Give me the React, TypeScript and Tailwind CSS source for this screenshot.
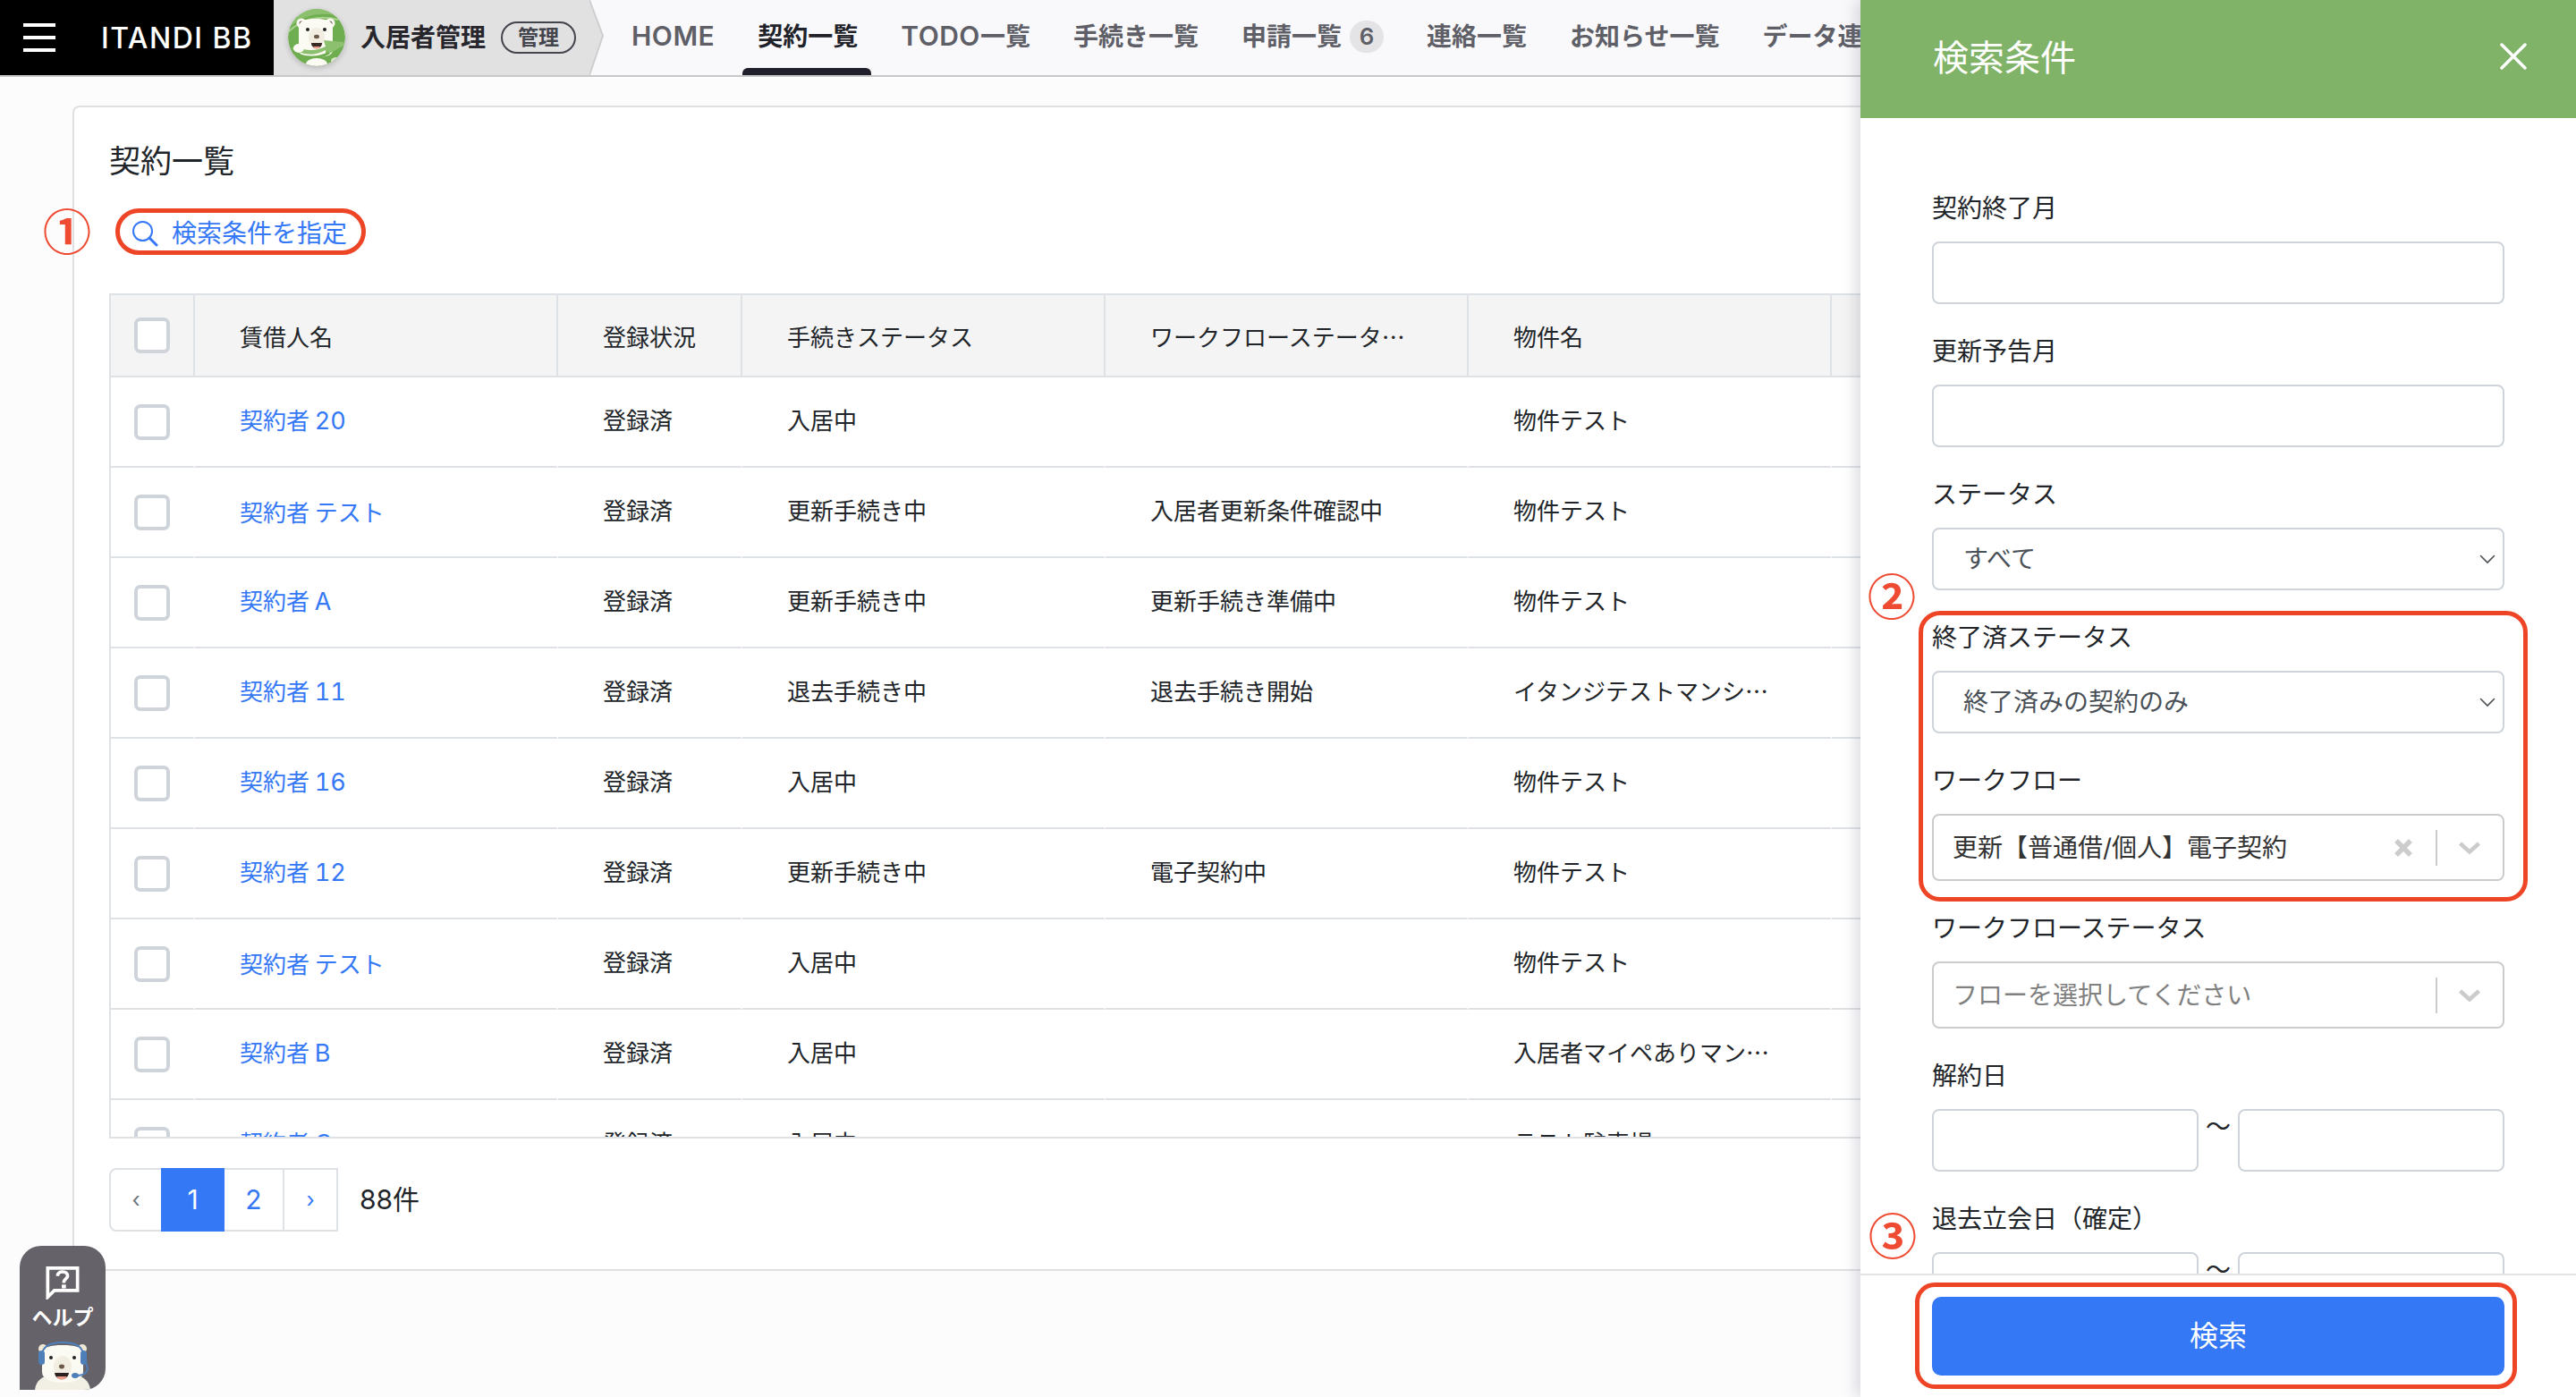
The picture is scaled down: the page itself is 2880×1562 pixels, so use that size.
import React from "react";

const FONT = "font-['Inter','Noto_Sans_CJK_JP',sans-serif]";
const JP = "font-['Noto_Sans_CJK_JP',sans-serif]";

type Row = { name: string; reg: string; proc: string; flow: string; prop: string };
const rows: Row[] = [
  { name: "20", reg: "登録済", proc: "入居中", flow: "", prop: "物件テスト" },
  { name: "テスト", reg: "登録済", proc: "更新手続き中", flow: "入居者更新条件確認中", prop: "物件テスト" },
  { name: "A", reg: "登録済", proc: "更新手続き中", flow: "更新手続き準備中", prop: "物件テスト" },
  { name: "11", reg: "登録済", proc: "退去手続き中", flow: "退去手続き開始", prop: "イタンジテストマンシ…" },
  { name: "16", reg: "登録済", proc: "入居中", flow: "", prop: "物件テスト" },
  { name: "12", reg: "登録済", proc: "更新手続き中", flow: "電子契約中", prop: "物件テスト" },
  { name: "テスト", reg: "登録済", proc: "入居中", flow: "", prop: "物件テスト" },
  { name: "B", reg: "登録済", proc: "入居中", flow: "", prop: "入居者マイペありマン…" },
  { name: "C", reg: "登録済", proc: "入居中", flow: "", prop: "テスト駐車場" },
];

function BearAvatar() {
  return (
    <svg viewBox="0 0 64 64" className="h-[64px] w-[64px] rounded-full shadow-[0_2px_6px_rgba(0,0,0,0.2)]">
      <defs>
        <clipPath id="av">
          <circle cx="32" cy="32" r="32" />
        </clipPath>
      </defs>
      <g clipPath="url(#av)">
        <rect width="64" height="64" fill="#6fae50" />
        <path d="M0 22C14 8 34 2 60 8L64 0H0Z" fill="#8cc06f" />
        <path d="M0 26C14 12 34 6 56 12" stroke="#a9d28f" strokeWidth="2" fill="none" />
        <circle cx="15" cy="16" r="5.5" fill="#fbfaf3" />
        <circle cx="15" cy="16" r="2.5" fill="#6b5a4a" />
        <circle cx="47" cy="16" r="5.5" fill="#fbfaf3" />
        <circle cx="47" cy="16" r="2.5" fill="#6b5a4a" />
        <path d="M12 20C12 13 20 11 31 11C42 11 50 13 50 20V46C50 52 42 54 31 54C20 54 12 52 12 46Z" fill="#fbfaf3" />
        <ellipse cx="32" cy="32" rx="9" ry="11" fill="#f1ede1" />
        <circle cx="22" cy="23" r="2" fill="#222" />
        <circle cx="41" cy="23" r="2" fill="#222" />
        <ellipse cx="32" cy="31" rx="3" ry="2.2" fill="#6b5a4a" />
        <path d="M26 38H38C38 43 34 44 32 44C30 44 26 43 26 38Z" fill="#3a2a26" />
        <path d="M28 42H36C35 44 33 44.5 32 44.5C31 44.5 29 44 28 42Z" fill="#ee9c8a" />
        <path d="M4 44C16 52 30 53 42 46L42 52L64 40L62 37L40 35L42 42C30 48 18 47 8 41Z" fill="#8cc06f" />
        <path d="M4 47C16 56 34 56 46 49" stroke="#6fae50" strokeWidth="3" fill="none" />
        <ellipse cx="12" cy="44" rx="6" ry="5" fill="#fbfaf3" />
        <ellipse cx="32" cy="62" rx="12" ry="7" fill="#fbfaf3" />
        <ellipse cx="54" cy="58" rx="6" ry="4" fill="#d8e8c8" />
      </g>
    </svg>
  );
}

function HelpBear() {
  return (
    <svg viewBox="0 0 66 54" className="h-[54px] w-[66px]">
      <path d="M2 54C3 44 10 39 18 38H48C56 39 63 44 64 54Z" fill="#f2efe4" />
      <circle cx="11" cy="8" r="5" fill="#efe8d4" />
      <circle cx="55" cy="8" r="5" fill="#efe8d4" />
      <path d="M10 14C10 6 20 4 33 4C46 4 56 6 56 14V34C56 42 46 46 33 46C20 46 10 42 10 34Z" fill="#fbfaf3" />
      <path d="M10 16C10 4 22 1 33 1C44 1 56 4 56 16" stroke="#4f7fb8" strokeWidth="2" fill="none" />
      <rect x="6" y="10" width="7" height="16" rx="3.5" fill="#4f7fb8" />
      <rect x="53" y="10" width="7" height="16" rx="3.5" fill="#4f7fb8" />
      <path d="M59 24C63 32 60 38 48 38" stroke="#4f7fb8" strokeWidth="2" fill="none" />
      <ellipse cx="47" cy="38" rx="4" ry="3" fill="#4f7fb8" />
      <ellipse cx="33" cy="28" rx="10" ry="12" fill="#f1ede1" />
      <circle cx="20" cy="18" r="2" fill="#222" />
      <circle cx="46" cy="18" r="2" fill="#222" />
      <ellipse cx="32" cy="28" rx="3" ry="2.4" fill="#6b5a4a" />
      <path d="M24 35H40C39 41 35 42 32 42C29 42 25 41 24 35Z" fill="#2b2120" />
      <path d="M26 39H38C36 42 34 42.5 32 42.5C30 42.5 28 42 26 39Z" fill="#ee9c8a" />
    </svg>
  );
}

function Chevron({ heavy }: { heavy?: boolean }) {
  return heavy ? (
    <svg viewBox="0 0 26 16" className="h-[16px] w-[26px]">
      <path d="M2.5 3L13 12.5L23.5 3" stroke="#cccccc" strokeWidth="4.5" fill="none" />
    </svg>
  ) : (
    <svg viewBox="0 0 18 11" className="h-[11px] w-[18px]">
      <path d="M1.5 1.5L9 9L16.5 1.5" stroke="#4a4f55" strokeWidth="1.6" fill="none" strokeLinecap="round" />
    </svg>
  );
}

function Check() {
  return <div className="mx-auto h-[40px] w-[40px] rounded-[7px] border-[4px] border-[#ced4da] bg-white" />;
}

function Label({ children }: { children: React.ReactNode }) {
  return <div className="mb-[17px] flex h-[40px] items-center text-[28px] leading-[40px] text-[#212529]">{children}</div>;
}

function TextInput() {
  return <input className="block h-[70px] w-full rounded-[8px] border-2 border-[#ced4da] bg-white" />;
}

function Field({ label, children }: { label: string; children: React.ReactNode }) {
  return (
    <div className="mb-[33px]">
      <Label>{label}</Label>
      {children}
    </div>
  );
}

function NativeSelect({ value }: { value: string }) {
  return (
    <div className="flex h-[70px] items-center justify-between rounded-[8px] border-2 border-[#ced4da] bg-white pl-[33px] pr-[8px] text-[28px] text-[#495057]">
      <span>{value}</span>
      <Chevron />
    </div>
  );
}

function ComboSelect({ value, placeholder }: { value?: string; placeholder?: string }) {
  return (
    <div className="flex h-[75px] items-center rounded-[8px] border-2 border-[#cccccc] bg-white pl-[21px] text-[28px]">
      <span className={value ? "flex-1 text-[#333333]" : "flex-1 text-[#808080]"}>{value ?? placeholder}</span>
      {value ? (
        <svg viewBox="0 0 22 22" className="mr-[25px] h-[22px] w-[22px]">
          <path d="M3 3L19 19M19 3L3 19" stroke="#cccccc" strokeWidth="5.5" />
        </svg>
      ) : null}
      <div className="h-[40px] w-[2px] bg-[#cccccc]" />
      <div className="ml-[23px] mr-[24px] flex">
        <Chevron heavy />
      </div>
    </div>
  );
}

function DateRange() {
  return (
    <div className="flex items-start">
      <input className="block h-[70px] w-[298px] rounded-[8px] border-2 border-[#ced4da] bg-white" />
      <div className="w-[44px] text-center text-[28px] leading-[40px] text-[#212529]">〜</div>
      <input className="block h-[70px] w-[298px] rounded-[8px] border-2 border-[#ced4da] bg-white" />
    </div>
  );
}

function NavItem({ label, latin, active }: { label: string; latin?: string; active?: boolean }) {
  return (
    <div className="relative flex h-[84px] shrink-0 items-center pb-[3px]">
      <span className={active ? "text-[28px] font-bold text-[#212129]" : "text-[28px] font-semibold text-[#5f5f68]"}>
        {latin ? <span className="text-[30px] tracking-[0.5px]">{latin}</span> : null}
        {label}
      </span>
      {active ? <div className="absolute bottom-0 left-[-17px] right-[-15px] h-[8px] rounded-t-[6px] bg-[#20202c]" /> : null}
    </div>
  );
}

export default function App() {
  const th = `border-b-2 border-r-2 border-[#dee2e6] bg-[#f4f4f4] pl-[50px] pt-[1px] text-left align-middle text-[26px] font-normal text-[#212529] ${JP}`;
  const td = `border-b-2 border-r-2 border-b-[#dee2e6] border-r-white pb-[6px] pl-[50px] align-middle text-[26px] text-[#212529] ${JP}`;
  const nameTd = `border-b-2 border-r-2 border-b-[#dee2e6] border-r-white pb-[3px] pl-[50px] align-middle text-[26px] ${JP}`;
  const marker = `absolute flex h-[60px] w-[60px] items-center justify-center text-[54px] font-bold leading-none text-[#ef4a32] ${JP}`;
  return (
    <div className={`relative h-[1562px] w-[2880px] overflow-hidden bg-[#fcfcfd] ${FONT}`}>
      <header className="flex h-[86px] border-b-2 border-[#c8c8c8] bg-[#f9f9fb]">
        <div className="flex h-[84px] w-[306px] shrink-0 items-center bg-black pl-[26px]">
          <div className="flex h-[32px] w-[36px] flex-col justify-between">
            <div className="h-[4px] bg-white" />
            <div className="h-[4px] bg-white" />
            <div className="h-[4px] bg-white" />
          </div>
          <span className="ml-[51px] pt-[1px] text-[32px] font-medium tracking-[1.5px] text-white">ITANDI BB</span>
        </div>
        <div className="flex h-[84px] w-[353px] shrink-0 items-center bg-[#e1e1e2] pl-[16px]">
          <BearAvatar />
          <span className="ml-[17px] text-[28px] font-bold text-[#26262c]">入居者管理</span>
          <span className="ml-[17px] flex h-[36px] w-[84px] items-center justify-center rounded-full border-2 border-[#44444c] text-[23px] font-bold text-[#44444c]">管理</span>
        </div>
        <svg viewBox="0 0 16 84" className="h-[84px] w-[16px] shrink-0">
          <path d="M0 0L15 40L0 84Z" fill="#e1e1e2" />
          <path d="M0 0L15 40L0 84" fill="none" stroke="#cfcfd2" strokeWidth="2" />
        </svg>
        <nav className="ml-[31px] flex items-center gap-[48px] whitespace-nowrap">
          <NavItem latin="HOME" label="" />
          <NavItem label="契約一覧" active />
          <NavItem latin="TODO" label="一覧" />
          <NavItem label="手続き一覧" />
          <div className="flex items-center gap-[9px]">
            <NavItem label="申請一覧" />
            <span className="mb-[3px] flex h-[36px] w-[38px] items-center justify-center rounded-full bg-[#e4e4e6] text-[26px] font-semibold text-[#5f5f68]">6</span>
          </div>
          <NavItem label="連絡一覧" />
          <NavItem label="お知らせ一覧" />
          <NavItem label="データ連携" />
        </nav>
      </header>

      <main className="ml-[81px] mt-[32px] flex h-[1303px] w-[2900px] flex-col rounded-tl-[8px] border-2 border-[#e0e0e2] bg-white pl-[39px] pt-[35px]">
        <h1 className="flex h-[50px] items-center text-[35px] font-normal text-[#212529]">契約一覧</h1>
        <button className="ml-[25px] mt-[30px] flex h-[52px] items-center self-start text-[28px] text-[#3478f6]">
          <svg viewBox="0 0 30 30" className="h-[30px] w-[30px]">
            <circle cx="12.5" cy="12.5" r="10.5" stroke="#3478f6" strokeWidth="2" fill="none" />
            <path d="M20 20L28 28" stroke="#3478f6" strokeWidth="3" strokeLinecap="round" />
          </svg>
          <span className="ml-[15px]">検索条件を指定</span>
        </button>

        <div className="mt-[41px] h-[945px] overflow-hidden border-2 border-r-0 border-[#dee2e6]">
          <table className="w-[2330px] table-fixed border-separate border-spacing-0">
            <colgroup>
              <col className="w-[94px]" />
              <col className="w-[406px]" />
              <col className="w-[206px]" />
              <col className="w-[406px]" />
              <col className="w-[406px]" />
              <col className="w-[406px]" />
              <col className="w-[406px]" />
            </colgroup>
            <thead>
              <tr className="h-[92px]">
                <th className="border-b-2 border-r-2 border-[#dee2e6] bg-[#f4f4f4] align-middle"><Check /></th>
                <th className={th}>賃借人名</th>
                <th className={th}>登録状況</th>
                <th className={th}>手続きステータス</th>
                <th className={th}>ワークフローステータ…</th>
                <th className={th}>物件名</th>
                <th className={th}></th>
              </tr>
            </thead>
            <tbody>
              {rows.map((r, i) => (
                <tr key={i} className="h-[101px]">
                  <td className="border-b-2 border-r-2 border-b-[#dee2e6] border-r-white align-middle"><Check /></td>
                  <td className={nameTd}>
                    <span className="text-[#3478f6]">
                      契約者{" "}
                      <span className={/^[A-Z0-9]+$/.test(r.name) ? "font-['Inter'] text-[27px] tabular-nums" : ""}>{r.name}</span>
                    </span>
                  </td>
                  <td className={td}>{r.reg}</td>
                  <td className={td}>{r.proc}</td>
                  <td className={td}>{r.flow}</td>
                  <td className={td}>{r.prop}</td>
                  <td className={td}></td>
                </tr>
              ))}
            </tbody>
          </table>
        </div>

        <div className="mt-[33px] flex items-center">
          <div className="flex h-[71px] w-[256px] items-stretch rounded-l-[8px] border-2 border-[#dee2e6] text-[30px]">
            <div className="flex w-[56px] items-center justify-center text-[24px] text-[#6c757d]">‹</div>
            <div className="my-[-2px] flex w-[71px] items-center justify-center bg-[#3478f6] text-white">1</div>
            <div className="flex w-[67px] items-center justify-center border-r-2 border-[#dee2e6] text-[#3478f6]">2</div>
            <div className="flex flex-1 items-center justify-center text-[24px] text-[#3478f6]">›</div>
          </div>
          <span className="ml-[24px] text-[30px] text-[#212529]">88件</span>
        </div>
      </main>

      <div className="absolute bottom-[8px] left-[22px] flex h-[161px] w-[96px] flex-col items-center overflow-hidden rounded-[24px] rounded-bl-none bg-[#5d5a61]/95 pt-[23px]">
        <svg viewBox="0 0 40 40" className="h-[40px] w-[40px]">
          <path d="M2 2H38V29H10L2 37Z" fill="none" stroke="#ffffff" strokeWidth="4" />
          <path d="M14 11.5C14 8 17 6.5 20 6.5C23.5 6.5 26 8.5 26 11.5C26 15 21.5 15 21.5 19V20" fill="none" stroke="#ffffff" strokeWidth="4" />
          <rect x="19" y="22" width="5" height="4.5" fill="#ffffff" />
        </svg>
        <span className="mt-[4px] text-[23px] font-bold leading-[32px] text-white">ヘルプ</span>
        <div className="mt-[11px]"><HelpBear /></div>
      </div>

      <aside className="absolute right-0 top-0 flex h-[1562px] w-[800px] flex-col bg-white shadow-[-6px_0_14px_rgba(110,110,130,0.22)]">
        <div className="flex h-[132px] shrink-0 items-center justify-between bg-[#80b368] pb-[3px] pl-[81px] pr-[55px]">
          <span className="text-[40px] font-normal text-white">検索条件</span>
          <svg viewBox="0 0 30 30" className="mb-[4px] h-[30px] w-[30px]">
            <path d="M2 2L28 28M28 2L2 28" stroke="#ffffff" strokeWidth="3.5" strokeLinecap="round" />
          </svg>
        </div>
        <div className="flex-1 overflow-hidden px-[80px] pt-[81px]">
          <Field label="契約終了月"><TextInput /></Field>
          <Field label="更新予告月"><TextInput /></Field>
          <Field label="ステータス"><NativeSelect value="すべて" /></Field>
          <Field label="終了済ステータス"><NativeSelect value="終了済みの契約のみ" /></Field>
          <Field label="ワークフロー"><ComboSelect value="更新【普通借/個人】電子契約" /></Field>
          <Field label="ワークフローステータス"><ComboSelect placeholder="フローを選択してください" /></Field>
          <Field label="解約日"><DateRange /></Field>
          <Field label="退去立会日（確定）"><DateRange /></Field>
        </div>
        <div className="h-[138px] shrink-0 border-t-2 border-[#e4e4e6] bg-white px-[80px] pt-[24px]">
          <button className="h-[88px] w-full rounded-[10px] bg-[#3478f6] text-[32px] text-white">検索</button>
        </div>
      </aside>

      <div className="absolute left-[129px] top-[233px] h-[52px] w-[280px] rounded-full border-[5px] border-[#ef4527]" />
      <div className="absolute left-[2145px] top-[683px] h-[325px] w-[681px] rounded-[24px] border-[5px] border-[#ef4527]" />
      <div className="absolute left-[2141px] top-[1434px] h-[119px] w-[673px] rounded-[22px] border-[5px] border-[#ef4527]" />
      <span className={`${marker} left-[45px] top-[227px]`}>①</span>
      <span className={`${marker} left-[2085px] top-[635px]`}>②</span>
      <span className={`${marker} left-[2086px] top-[1350px]`}>③</span>
    </div>
  );
}
